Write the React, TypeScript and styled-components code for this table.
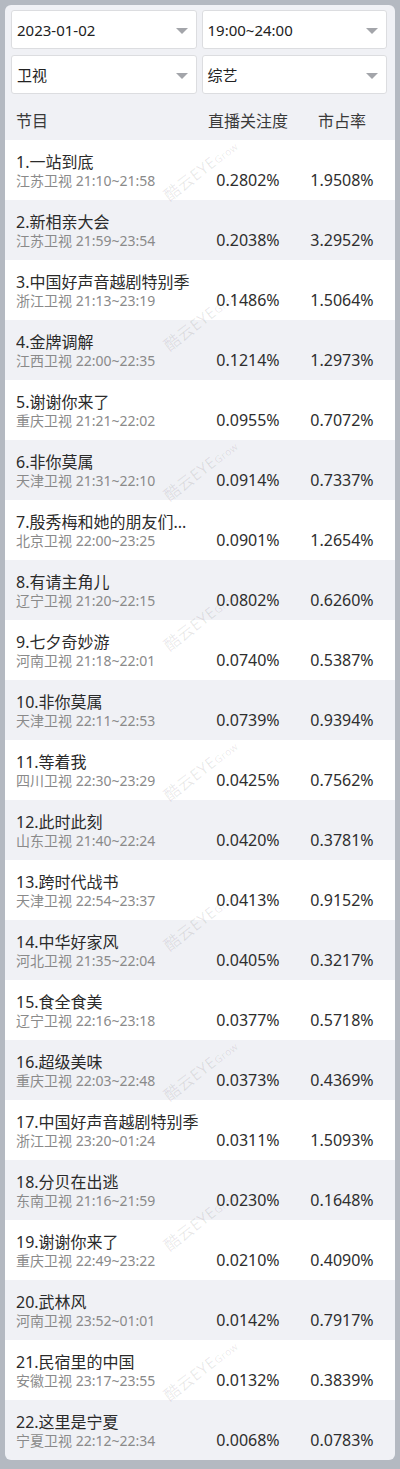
import React from "react";
import styled, { createGlobalStyle } from "styled-components";

const GlobalStyle = createGlobalStyle`
  html, body {
    margin: 0;
    padding: 0;
    background: #b4b9c1;
  }
  body {
    font-family: "Noto Sans", "Noto Sans CJK SC", sans-serif;
    color: #333;
  }
`;

const rows = [
  ["1.一站到底", "江苏卫视 21:10~21:58", "0.2802%", "1.9508%"],
  ["2.新相亲大会", "江苏卫视 21:59~23:54", "0.2038%", "3.2952%"],
  ["3.中国好声音越剧特别季", "浙江卫视 21:13~23:19", "0.1486%", "1.5064%"],
  ["4.金牌调解", "江西卫视 22:00~22:35", "0.1214%", "1.2973%"],
  ["5.谢谢你来了", "重庆卫视 21:21~22:02", "0.0955%", "0.7072%"],
  ["6.非你莫属", "天津卫视 21:31~22:10", "0.0914%", "0.7337%"],
  ["7.殷秀梅和她的朋友们...", "北京卫视 22:00~23:25", "0.0901%", "1.2654%"],
  ["8.有请主角儿", "辽宁卫视 21:20~22:15", "0.0802%", "0.6260%"],
  ["9.七夕奇妙游", "河南卫视 21:18~22:01", "0.0740%", "0.5387%"],
  ["10.非你莫属", "天津卫视 22:11~22:53", "0.0739%", "0.9394%"],
  ["11.等着我", "四川卫视 22:30~23:29", "0.0425%", "0.7562%"],
  ["12.此时此刻", "山东卫视 21:40~22:24", "0.0420%", "0.3781%"],
  ["13.跨时代战书", "天津卫视 22:54~23:37", "0.0413%", "0.9152%"],
  ["14.中华好家风", "河北卫视 21:35~22:04", "0.0405%", "0.3217%"],
  ["15.食全食美", "辽宁卫视 22:16~23:18", "0.0377%", "0.5718%"],
  ["16.超级美味", "重庆卫视 22:03~22:48", "0.0373%", "0.4369%"],
  ["17.中国好声音越剧特别季", "浙江卫视 23:20~01:24", "0.0311%", "1.5093%"],
  ["18.分贝在出逃", "东南卫视 21:16~21:59", "0.0230%", "0.1648%"],
  ["19.谢谢你来了", "重庆卫视 22:49~23:22", "0.0210%", "0.4090%"],
  ["20.武林风", "河南卫视 23:52~01:01", "0.0142%", "0.7917%"],
  ["21.民宿里的中国", "安徽卫视 23:17~23:55", "0.0132%", "0.3839%"],
  ["22.这里是宁夏", "宁夏卫视 22:12~22:34", "0.0068%", "0.0783%"],
];

const Page = styled.div`
  padding: 5px;
  min-height: 1469px;
  box-sizing: border-box;
`;

const Card = styled.div`
  background: #f0f1f5;
  border-radius: 6px;
  overflow: hidden;
`;

const Filters = styled.div`
  display: grid;
  grid-template-columns: 1fr 1fr;
  column-gap: 5px;
  row-gap: 6px;
  padding: 5px 8px 0 6px;
`;

const Select = styled.div`
  height: 39px;
  box-sizing: border-box;
  background: #fff;
  border: 1px solid #dcdde0;
  border-radius: 3px;
  display: flex;
  align-items: center;
  justify-content: space-between;
  padding: 0 8px 0 5px;
  font-size: 15px;
  color: #222;
`;

const Arrow = styled.span`
  width: 0;
  height: 0;
  border-left: 6px solid transparent;
  border-right: 6px solid transparent;
  border-top: 6px solid #a3a5aa;
  margin-top: 3px;
`;

const Grid = styled.div<{ $bg?: string }>`
  display: grid;
  grid-template-columns: 1fr 94px 94px;
  padding: 0 6px 0 11px;
  background: ${(p) => p.$bg || "transparent"};
`;

const Head = styled(Grid)`
  padding-top: 17px;
  padding-bottom: 9px;
  font-size: 16px;
  line-height: 20px;
  color: #3a3a3a;
`;

const HeadCell = styled.div<{ $center?: boolean }>`
  text-align: ${(p) => (p.$center ? "center" : "left")};
`;

const List = styled.div`
  position: relative;
`;

const Row = styled(Grid)`
  height: 60px;
  box-sizing: border-box;
`;

const Name = styled.div`
  padding-top: 12px;
  min-width: 0;
`;

const Title = styled.div`
  font-size: 16px;
  line-height: 20px;
  color: #2b2b2b;
  white-space: nowrap;
  overflow: hidden;
`;

const Sub = styled.div`
  font-size: 14px;
  line-height: 17px;
  color: #8a8a8a;
  white-space: nowrap;
`;

const Num = styled.div`
  align-self: end;
  padding-bottom: 10px;
  font-size: 16px;
  line-height: 20px;
  text-align: center;
  color: #2e2e2e;
`;

const Mark = styled.div`
  position: absolute;
  left: 152px;
  transform: rotate(-38deg);
  transform-origin: center;
  white-space: nowrap;
  color: rgba(0, 0, 0, 0.09);
  font-size: 16px;
  line-height: 18px;
  letter-spacing: 0.5px;
  pointer-events: none;
  & small {
    font-size: 10px;
  }
`;

export default function App() {
  return (
    <>
      <GlobalStyle />
      <Page>
        <Card>
          <Filters>
            <Select>
              2023-01-02
              <Arrow />
            </Select>
            <Select>
              19:00~24:00
              <Arrow />
            </Select>
            <Select>
              卫视
              <Arrow />
            </Select>
            <Select>
              综艺
              <Arrow />
            </Select>
          </Filters>
          <Head>
            <HeadCell>节目</HeadCell>
            <HeadCell $center>直播关注度</HeadCell>
            <HeadCell $center>市占率</HeadCell>
          </Head>
          <List>
            {rows.map((r, i) => (
              <Row key={i} $bg={i % 2 === 0 ? "#fff" : undefined}>
                <Name>
                  <Title>{r[0]}</Title>
                  <Sub>{r[1]}</Sub>
                </Name>
                <Num>{r[2]}</Num>
                <Num>{r[3]}</Num>
              </Row>
            ))}
            {Array.from({ length: 9 }).map((_, i) => (
              <Mark key={"m" + i} style={{ top: 21 + i * 150 }}>
                酷云EYE<small>Grow</small>
              </Mark>
            ))}
          </List>
        </Card>
      </Page>
    </>
  );
}
